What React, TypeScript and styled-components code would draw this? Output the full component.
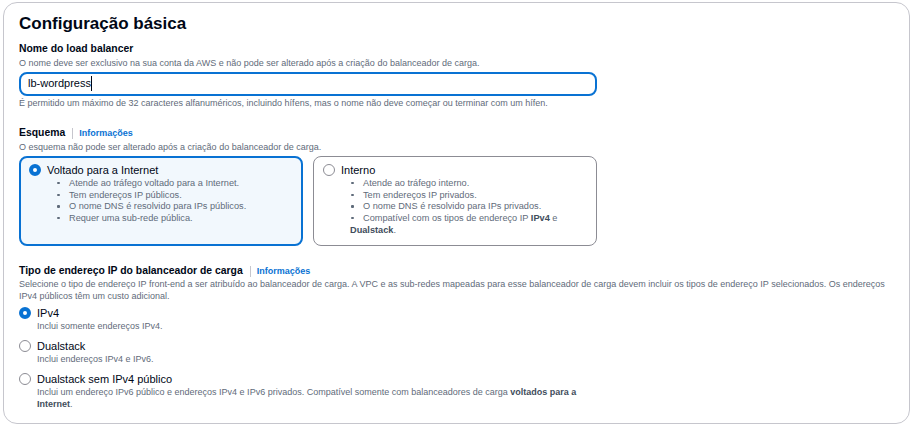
import React from "react";
import styled, { createGlobalStyle } from "styled-components";

const GlobalStyle = createGlobalStyle`
  html, body { margin: 0; padding: 0; background: #ffffff; }
  body { font-family: "Liberation Sans", Arial, sans-serif; color: #000716; }
  * { box-sizing: border-box; }
`;

const Page = styled.div`
  padding: 2px 0 0 3px;
`;

const Card = styled.section`
  width: 907px;
  border: 1px solid #c6c6cd;
  border-radius: 14px;
  padding: 10px 16px 13px 15px;
  background: #fff;
`;

const Heading = styled.h2`
  margin: 0;
  font-size: 17px;
  line-height: 22px;
  font-weight: 700;
  color: #000716;
`;

const Field = styled.div<{ $mt: number }>`
  margin-top: ${(p) => p.$mt}px;
`;

const LabelRow = styled.div`
  display: flex;
  align-items: center;
  height: 14px;
`;

const Label = styled.span`
  font-size: 10.4px;
  line-height: 14px;
  font-weight: 700;
  color: #000716;
`;

const Divider = styled.span`
  width: 1px;
  height: 11px;
  background: #c6c6cd;
  margin: 0 6px 0 7px;
`;

const InfoLink = styled.a`
  font-size: 9px;
  line-height: 14px;
  font-weight: 700;
  color: #0972d3;
  text-decoration: none;
`;

const Description = styled.div<{ $mt?: number }>`
  margin-top: ${(p) => p.$mt ?? 0}px;
  font-size: 9px;
  line-height: 12px;
  color: #5f6b7a;
`;

const InputBox = styled.div`
  margin-top: 3px;
  width: 578px;
  height: 24px;
  border: 2px solid #0972d3;
  border-radius: 8px;
  padding: 0 7px 2px;
  display: flex;
  align-items: center;
  font-size: 11px;
  line-height: 14px;
  color: #000716;
`;

const Caret = styled.span`
  display: inline-block;
  width: 1px;
  height: 15px;
  background: #000716;
`;

const TileGrid = styled.div`
  margin-top: 3px;
  width: 578px;
  display: grid;
  grid-template-columns: 1fr 1fr;
  gap: 10px;
`;

const Tile = styled.div<{ $selected?: boolean }>`
  height: 90px;
  border-radius: 8px;
  border: ${(p) => (p.$selected ? "2px solid #0972d3" : "1px solid #8c8c94")};
  background: ${(p) => (p.$selected ? "#f2f8fd" : "#ffffff")};
  padding: ${(p) => (p.$selected ? "5px 9px 0 8px" : "6px 10px 0 9px")};
`;

const OptionRow = styled.div`
  display: flex;
  align-items: center;
  height: 14px;
`;

const Radio = styled.span<{ $checked?: boolean }>`
  flex: none;
  width: 12px;
  height: 12px;
  border-radius: 50%;
  background: #ffffff;
  border: ${(p) => (p.$checked ? "4px solid #0972d3" : "1px solid #8c8c94")};
  margin-right: 6px;
`;

const OptionLabel = styled.span`
  font-size: 11px;
  line-height: 14px;
  color: #000716;
`;

const BulletList = styled.ul`
  list-style: none;
  margin: 1px 0 0 0;
  padding: 0 0 0 27px;
`;

const BulletItem = styled.li`
  font-size: 9.2px;
  line-height: 11.7px;
  color: #5f6b7a;
`;

const Dot = styled.span`
  display: inline-block;
  width: 2.5px;
  height: 2.5px;
  border-radius: 1px;
  background: #5f6b7a;
  vertical-align: middle;
  margin: 0 9.5px 1px 1px;
`;

const Strong = styled.b`
  font-weight: 700;
  color: #414d5c;
`;

const RadioGroup = styled.div`
  margin-top: 4px;
  width: 578px;
  display: flex;
  flex-direction: column;
  gap: 7px;
`;

const RadioItem = styled.div``;

const RadioDescription = styled.div`
  padding-left: 18px;
  font-size: 9px;
  line-height: 12px;
  color: #5f6b7a;
`;

const Bullet: React.FC<{ children: React.ReactNode }> = ({ children }) => (
  <BulletItem>
    <Dot />
    {children}
  </BulletItem>
);

export default function App() {
  return (
    <>
      <GlobalStyle />
      <Page>
        <Card>
          <Heading>Configuração básica</Heading>

          <Field $mt={7}>
            <LabelRow>
              <Label>Nome do load balancer</Label>
            </LabelRow>
            <Description $mt={1}>
              O nome deve ser exclusivo na sua conta da AWS e não pode ser alterado após a criação do balanceador de carga.
            </Description>
            <InputBox>
              lb-wordpress
              <Caret />
            </InputBox>
            <Description $mt={1}>
              É permitido um máximo de 32 caracteres alfanuméricos, incluindo hífens, mas o nome não deve começar ou terminar com um hífen.
            </Description>
          </Field>

          <Field $mt={17}>
            <LabelRow>
              <Label>Esquema</Label>
              <Divider />
              <InfoLink href="#">Informações</InfoLink>
            </LabelRow>
            <Description $mt={1}>O esquema não pode ser alterado após a criação do balanceador de carga.</Description>
            <TileGrid>
              <Tile $selected>
                <OptionRow>
                  <Radio $checked />
                  <OptionLabel>Voltado para a Internet</OptionLabel>
                </OptionRow>
                <BulletList>
                  <Bullet>Atende ao tráfego voltado para a Internet.</Bullet>
                  <Bullet>Tem endereços IP públicos.</Bullet>
                  <Bullet>O nome DNS é resolvido para IPs públicos.</Bullet>
                  <Bullet>Requer uma sub-rede pública.</Bullet>
                </BulletList>
              </Tile>
              <Tile>
                <OptionRow>
                  <Radio />
                  <OptionLabel>Interno</OptionLabel>
                </OptionRow>
                <BulletList>
                  <Bullet>Atende ao tráfego interno.</Bullet>
                  <Bullet>Tem endereços IP privados.</Bullet>
                  <Bullet>O nome DNS é resolvido para IPs privados.</Bullet>
                  <Bullet>
                    Compatível com os tipos de endereço IP <Strong>IPv4</Strong> e <Strong>Dualstack</Strong>.
                  </Bullet>
                </BulletList>
              </Tile>
            </TileGrid>
          </Field>

          <Field $mt={18}>
            <LabelRow>
              <Label>Tipo de endereço IP do balanceador de carga</Label>
              <Divider />
              <InfoLink href="#">Informações</InfoLink>
            </LabelRow>
            <Description>
              Selecione o tipo de endereço IP front-end a ser atribuído ao balanceador de carga. A VPC e as sub-redes mapeadas para esse balanceador de carga devem incluir os tipos de endereço IP selecionados. Os endereços IPv4 públicos têm um custo adicional.
            </Description>
            <RadioGroup>
              <RadioItem>
                <OptionRow>
                  <Radio $checked />
                  <OptionLabel>IPv4</OptionLabel>
                </OptionRow>
                <RadioDescription>Inclui somente endereços IPv4.</RadioDescription>
              </RadioItem>
              <RadioItem>
                <OptionRow>
                  <Radio />
                  <OptionLabel>Dualstack</OptionLabel>
                </OptionRow>
                <RadioDescription>Inclui endereços IPv4 e IPv6.</RadioDescription>
              </RadioItem>
              <RadioItem>
                <OptionRow>
                  <Radio />
                  <OptionLabel>Dualstack sem IPv4 público</OptionLabel>
                </OptionRow>
                <RadioDescription>
                  Inclui um endereço IPv6 público e endereços IPv4 e IPv6 privados. Compatível somente com balanceadores de carga <Strong>voltados para a</Strong> <Strong>Internet</Strong>.
                </RadioDescription>
              </RadioItem>
            </RadioGroup>
          </Field>
        </Card>
      </Page>
    </>
  );
}
